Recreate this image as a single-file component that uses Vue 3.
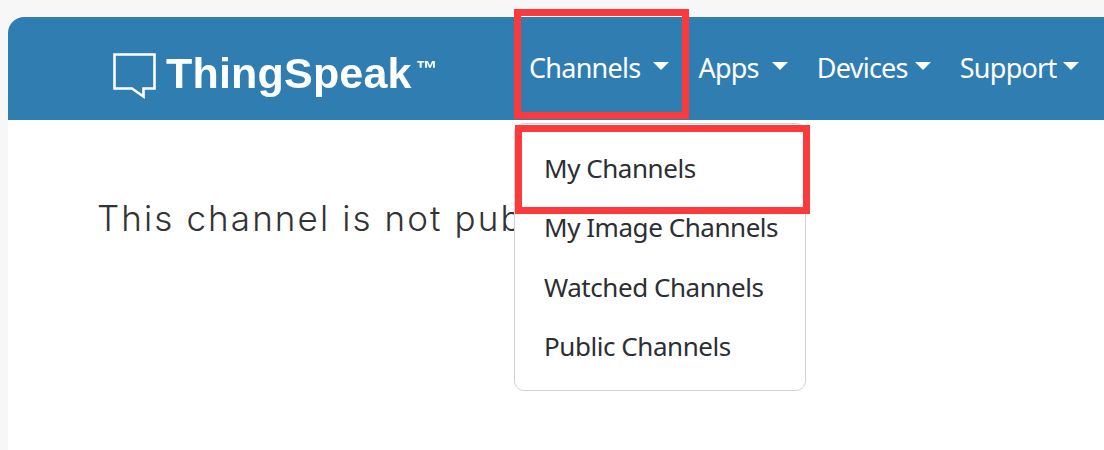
<script setup>
const nav = [
  { label: 'Channels', wide: true },
  { label: 'Apps', wide: true },
  { label: 'Devices' },
  { label: 'Support' },
]
const items = ['My Channels', 'My Image Channels', 'Watched Channels', 'Public Channels']
</script>

<template>
  <div class="page">
    <div class="panel">
      <header class="bar">
        <div class="brand">
          <svg class="bubble" width="44" height="47" viewBox="0 0 44 47" fill="none">
            <path d="M1.5 1.5H41.5V35.5H30.5V43.5L19 35.5H1.5Z" stroke="#fff" stroke-width="2.6" />
          </svg>
          <span class="word">ThingSpeak</span><span class="tm">™</span>
        </div>
        <nav class="nav">
          <a v-for="n in nav" :key="n.label" class="link" :class="{ wide: n.wide }">
            {{ n.label }}<i class="caret"></i>
          </a>
        </nav>
      </header>
      <main class="content">
        <p class="notice">This channel is not public.</p>
      </main>
      <ul class="menu">
        <li v-for="i in items" :key="i">{{ i }}</li>
      </ul>
    </div>
    <div class="mark mark-nav"></div>
    <div class="mark mark-item"></div>
  </div>
</template>

<style>
html, body { margin: 0; background: #f7f7f7; }
</style>

<style scoped>
.page {
  position: relative;
  height: 450px;
  padding: 17px 0 0 8px;
  box-sizing: border-box;
  overflow: hidden;
  font-family: "Noto Sans", sans-serif;
}
.panel {
  position: relative;
  height: 433px;
  background: #fff;
  border-top-left-radius: 16px;
}
.bar {
  display: flex;
  align-items: center;
  height: 103px;
  background: #2f7db1;
  border-top-left-radius: 16px;
}
.brand {
  display: flex;
  align-items: flex-start;
  flex: none;
  width: 403px;
  padding: 36px 0 0 105px;
  box-sizing: border-box;
  height: 103px;
  color: #fff;
  font-family: "Liberation Sans", sans-serif;
  font-weight: 700;
  filter: blur(0.4px);
}
.bubble { flex: none; margin-right: 9px; }
.word {
  font-size: 43px;
  line-height: 43px;
  margin-top: -1px;
  letter-spacing: 0.2px;
}
.tm {
  font-size: 22px;
  line-height: 22px;
  margin-top: 5px;
  margin-left: 4px;
}
.nav { display: flex; margin-left: 118px; margin-top: -2px; }
.link {
  display: flex;
  align-items: center;
  color: #fff;
  font-size: 27px;
  letter-spacing: -0.75px;
  margin-right: 29px;
  white-space: nowrap;
}
.caret {
  width: 0;
  height: 0;
  margin-left: 7px;
  margin-bottom: 3px;
  border-left: 8px solid transparent;
  border-right: 8px solid transparent;
  border-top: 8px solid #fff;
}
.link.wide .caret { margin-left: 13px; }
.content { padding: 76px 0 0 89px; }
.notice {
  margin: 0;
  font-family: Inter, sans-serif;
  font-size: 35px;
  line-height: 44px;
  letter-spacing: 2.1px;
  color: #333;
  font-weight: 300;
  white-space: nowrap;
}
.menu {
  position: absolute;
  left: 506px;
  top: 106px;
  width: 292px;
  height: 268px;
  margin: 0;
  padding: 15px 0 0;
  box-sizing: border-box;
  list-style: none;
  background: #fff;
  border: 1px solid #d2d2d2;
  border-radius: 10px;
}
.menu li {
  height: 59.4px;
  line-height: 59.4px;
  padding-left: 29px;
  font-size: 26px;
  letter-spacing: -0.45px;
  color: #2b2f33;
  white-space: nowrap;
}
.mark {
  position: absolute;
  box-sizing: border-box;
  border: 7px solid #fc3a3c;
}
.mark-nav { left: 514px; top: 9px; width: 175px; height: 110px; }
.mark-item { left: 515px; top: 125px; width: 295px; height: 89px; }
</style>
